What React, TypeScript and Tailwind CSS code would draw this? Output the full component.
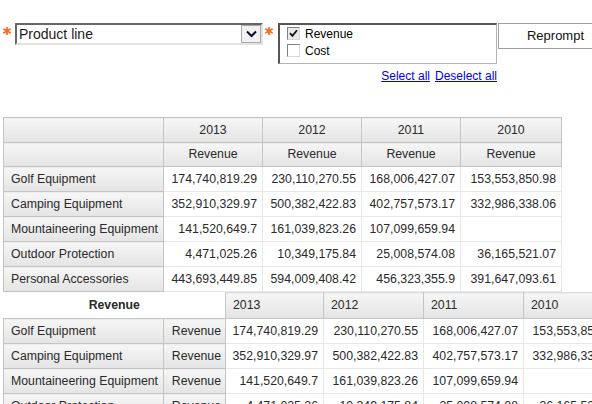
import React from "react"

const years = ["2013", "2012", "2011", "2010"]

const rows: { name: string; values: string[] }[] = [
  { name: "Golf Equipment", values: ["174,740,819.29", "230,110,270.55", "168,006,427.07", "153,553,850.98"] },
  { name: "Camping Equipment", values: ["352,910,329.97", "500,382,422.83", "402,757,573.17", "332,986,338.06"] },
  { name: "Mountaineering Equipment", values: ["141,520,649.7", "161,039,823.26", "107,099,659.94", ""] },
  { name: "Outdoor Protection", values: ["4,471,025.26", "10,349,175.84", "25,008,574.08", "36,165,521.07"] },
  { name: "Personal Accessories", values: ["443,693,449.85", "594,009,408.42", "456,323,355.9", "391,647,093.61"] },
]

const headCell = "border border-[#c4c4c4] bg-gradient-to-b from-[#f6f6f6] to-[#e4e4e4] p-0 overflow-hidden"
const dataCell = "border border-[#e8e8e8] bg-white p-0 text-right pr-[5px] whitespace-nowrap overflow-hidden"

function Asterisk() {
  return (
    <svg width="8" height="8" viewBox="0 0 8 8" className="mt-[4px]">
      <g stroke="#ff6a1a" strokeWidth="1.8" strokeLinecap="round">
        <line x1="4" y1="0.8" x2="4" y2="7.2" />
        <line x1="1" y1="2.3" x2="7" y2="5.7" />
        <line x1="1" y1="5.7" x2="7" y2="2.3" />
      </g>
    </svg>
  )
}

function CheckBox({ checked }: { checked?: boolean }) {
  return (
    <span
      className={`flex h-[13px] w-[13px] shrink-0 items-center justify-center border border-t-[#808080] border-l-[#808080] border-r-[#d8d8d8] border-b-[#d8d8d8] ${
        checked ? "bg-[#e8e8e8]" : "bg-white"
      }`}
    >
      {checked && (
        <svg width="9" height="9" viewBox="0 0 9 9">
          <path d="M1 4.2 L3.4 6.8 L8 1.2" fill="none" stroke="#111" strokeWidth="1.8" />
        </svg>
      )}
    </span>
  )
}

export default function App() {
  return (
    <div className="w-[592px] h-[404px] overflow-hidden bg-white font-['Liberation_Sans',Arial,sans-serif] text-[#2a2a2a]">
      {/* Prompt controls */}
      <div className="h-[117px] pt-[23px] pl-[3px] flex items-start">
        <div className="w-[12px] shrink-0 flex">
          <Asterisk />
        </div>
        <div className="w-[248px] h-[22px] shrink-0 flex items-center border-2 border-t-[#666] border-l-[#666] border-r-[#e2e2e2] border-b-[#e2e2e2] bg-white">
          <span className="flex-1 pl-[2px] text-[14px] leading-none text-[#1a1a1a]">Product line</span>
          <span className="w-[20px] h-[18px] flex items-center justify-center bg-[#f2f2f2] border border-[#a8a8a8]">
            <svg width="11" height="8" viewBox="0 0 11 8">
              <path d="M1 1.5 L5.5 6 L10 1.5" fill="none" stroke="#0a0a2a" strokeWidth="2" />
            </svg>
          </span>
        </div>
        <div className="w-[15px] shrink-0 pl-[2px] flex">
          <Asterisk />
        </div>
        <div className="w-[219px] shrink-0 flex flex-col">
          <div className="h-[41px] border-t-2 border-l-2 border-r border-b border-t-[#555] border-l-[#555] border-r-[#b4b4b4] border-b-[#b4b4b4] pl-[7px] pt-[2px] flex flex-col gap-[4px] text-[12px] text-black">
            <div className="flex items-center gap-[5px] h-[13px]">
              <CheckBox checked />
              <span>Revenue</span>
            </div>
            <div className="flex items-center gap-[5px] h-[13px]">
              <CheckBox />
              <span>Cost</span>
            </div>
          </div>
          <div className="mt-[5px] flex justify-end gap-[5px] text-[12px] leading-[14px] text-[#0000ee]">
            <a className="underline">Select all</a>
            <a className="underline">Deselect all</a>
          </div>
        </div>
        <button className="ml-[1px] w-[115px] h-[26px] shrink-0 border border-[#a0a0a0] bg-white text-[13px] text-[#111]">
          Reprompt
        </button>
      </div>

      {/* Crosstab 1 */}
      <div className="pl-[3px]">
        <table className="w-[558px] border-collapse table-fixed text-[12.3px] border border-[#bdbdbd]">
          <colgroup>
            <col className="w-[160px]" />
            <col className="w-[99px]" />
            <col className="w-[99px]" />
            <col className="w-[99px]" />
            <col className="w-[101px]" />
          </colgroup>
          <tbody>
            <tr className="h-[25px]">
              <td className={headCell}></td>
              {years.map((y) => (
                <td key={y} className={`${headCell} text-center`}>
                  {y}
                </td>
              ))}
            </tr>
            <tr className="h-[24px]">
              <td className={headCell}></td>
              {years.map((y) => (
                <td key={y} className={`${headCell} text-center`}>
                  Revenue
                </td>
              ))}
            </tr>
            {rows.map((r) => (
              <tr key={r.name} className="h-[25px]">
                <td className={`${headCell} pl-[7px] whitespace-nowrap`}>{r.name}</td>
                {r.values.map((v, i) => (
                  <td key={i} className={dataCell}>
                    {v}
                  </td>
                ))}
              </tr>
            ))}
          </tbody>
        </table>
      </div>

      {/* Crosstab 2 */}
      <div className="pl-[3px]">
        <table className="w-[620px] border-collapse table-fixed text-[12.3px]">
          <colgroup>
            <col className="w-[160px]" />
            <col className="w-[62px]" />
            <col className="w-[98px]" />
            <col className="w-[100px]" />
            <col className="w-[100px]" />
            <col className="w-[100px]" />
          </colgroup>
          <tbody>
            <tr className="h-[26px]">
              <td colSpan={2} className="p-0 text-center font-bold bg-white">
                Revenue
              </td>
              {years.map((y) => (
                <td key={y} className={`${headCell} border-t-[#dcdcdc] text-left pl-[7px]`}>
                  {y}
                </td>
              ))}
            </tr>
            {rows.map((r) => (
              <tr key={r.name} className="h-[25px]">
                <td className={`${headCell} pl-[7px] whitespace-nowrap`}>{r.name}</td>
                <td className={`${headCell} text-right pr-[4px]`}>Revenue</td>
                {r.values.map((v, i) => (
                  <td key={i} className={dataCell}>
                    {v}
                  </td>
                ))}
              </tr>
            ))}
          </tbody>
        </table>
      </div>
    </div>
  )
}
